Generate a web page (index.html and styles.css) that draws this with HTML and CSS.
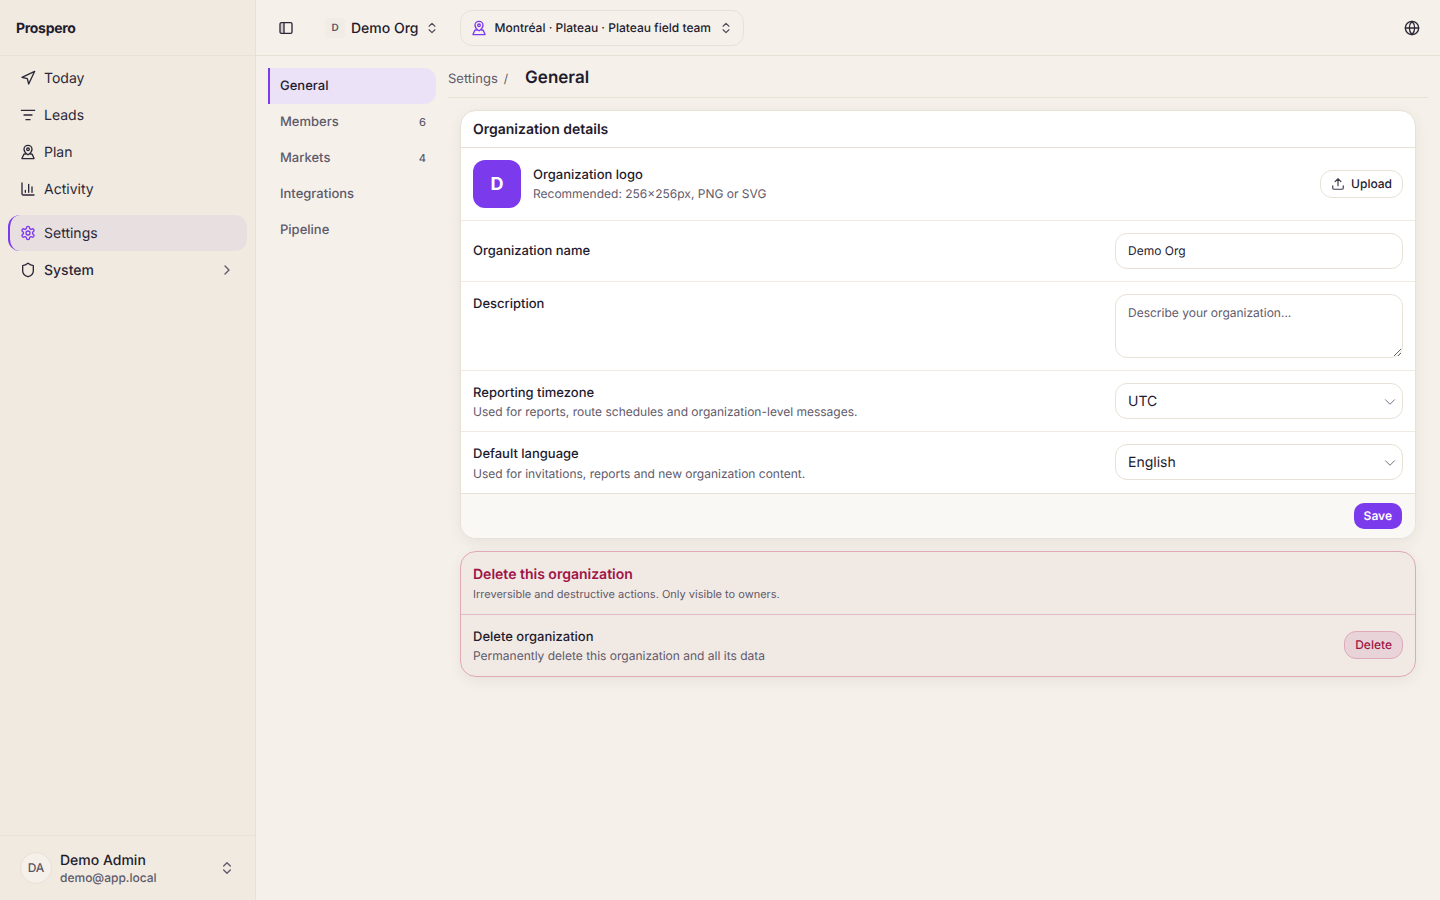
FILE: index.html
```html
<!DOCTYPE html>
<html lang="en">

<head>
    <meta charset="UTF-8">
    <meta name="viewport" content="width=device-width, initial-scale=1.0">
    <title>Prospero - Settings</title>
    <link rel="stylesheet" href="styles.css">
</head>

<body>
    <div class="app">
        <!-- main sidebar -->
        <aside class="sidebar">
            <div class="brand">Prospero</div>
            <nav class="nav">
                <div class="nav-group">
                    <a class="nav-item">
                        <svg class="icon" viewBox="0 0 24 24"><path d="M3 11l19-9-9 19-2-8-8-2z"/></svg>
                        <span>Today</span>
                    </a>
                    <a class="nav-item">
                        <svg class="icon" viewBox="0 0 24 24"><path d="M2 5h20M6 12h12M9 19h6"/></svg>
                        <span>Leads</span>
                    </a>
                    <a class="nav-item">
                        <svg class="icon" viewBox="0 0 24 24"><path d="M18 8c0 3.6-3.6 6.6-5.2 7.8a1.3 1.3 0 0 1-1.6 0C9.6 14.6 6 11.6 6 8a6 6 0 0 1 12 0z"/><circle cx="12" cy="8" r="2"/><path d="M8.8 15H6.6a1 1 0 0 0-.9.6L3 21.500a.4.4 0 0 0 .4.5h17.200a.4.4 0 0 0 .4-.5l-2.700-5.900a1 1 0 0 0-.9-.6h-2.200"/></svg>
                        <span>Plan</span>
                    </a>
                    <a class="nav-item">
                        <svg class="icon" viewBox="0 0 24 24"><path d="M3 3v16a2 2 0 0 0 2 2h16M8 17v-3M13 17V5M18 17V9"/></svg>
                        <span>Activity</span>
                    </a>
                </div>
                <div class="nav-group">
                    <a class="nav-item active">
                        <svg class="icon" viewBox="0 0 24 24"><path d="M12.220 2h-.44a2 2 0 0 0-2 2v.18a2 2 0 0 1-1 1.730l-.43.25a2 2 0 0 1-2 0l-.15-.08a2 2 0 0 0-2.730.73l-.22.38a2 2 0 0 0 .73 2.730l.15.1a2 2 0 0 1 1 1.720v.51a2 2 0 0 1-1 1.740l-.15.09a2 2 0 0 0-.73 2.730l.22.38a2 2 0 0 0 2.730.73l.15-.08a2 2 0 0 1 2 0l.43.25a2 2 0 0 1 1 1.730V20a2 2 0 0 0 2 2h.44a2 2 0 0 0 2-2v-.18a2 2 0 0 1 1-1.730l.43-.25a2 2 0 0 1 2 0l.15.08a2 2 0 0 0 2.730-.73l.22-.39a2 2 0 0 0-.73-2.730l-.15-.08a2 2 0 0 1-1-1.740v-.5a2 2 0 0 1 1-1.740l.15-.09a2 2 0 0 0 .73-2.730l-.22-.38a2 2 0 0 0-2.730-.73l-.15.08a2 2 0 0 1-2 0l-.43-.25a2 2 0 0 1-1-1.730V4a2 2 0 0 0-2-2z"/><circle cx="12" cy="12" r="3"/></svg>
                        <span>Settings</span>
                    </a>
                    <a class="nav-item system">
                        <svg class="icon" viewBox="0 0 24 24"><path d="M20 13c0 5-3.500 7.500-7.660 8.950a1 1 0 0 1-.67-.01C7.500 20.500 4 18 4 13V6a1 1 0 0 1 1-1c2 0 4.500-1.200 6.240-2.720a1.170 1.170 0 0 1 1.520 0C14.510 3.810 17 5 19 5a1 1 0 0 1 1 1z"/></svg>
                        <span>System</span>
                        <svg class="icon chevron-right" viewBox="0 0 24 24"><path d="M9 18l6-6-6-6"/></svg>
                    </a>
                </div>
            </nav>
            <div class="user">
                <div class="avatar">DA</div>
                <div class="user-info">
                    <div class="user-name">Demo Admin</div>
                    <div class="user-mail">demo@app.local</div>
                </div>
                <svg class="icon updown" viewBox="0 0 24 24"><path d="M7 15l5 5 5-5M7 9l5-5 5 5"/></svg>
            </div>
        </aside>

        <div class="main">
            <header class="topbar">
                <button class="toggle">
                    <svg class="icon toggle-icon" viewBox="0 0 24 24"><rect x="3" y="4" width="18" height="16" rx="2"/><path d="M9 4v16"/><path class="fill-bar" d="M3.500 5h5v14h-5z"/></svg>
                </button>
                <div class="org">
                    <span class="org-badge">D</span>
                    <span class="org-name">Demo Org</span>
                    <svg class="icon updown-small" viewBox="0 0 24 24"><path d="M7 15l5 5 5-5M7 9l5-5 5 5"/></svg>
                </div>
                <div class="team">
                    <svg class="icon team-icon" viewBox="0 0 24 24"><path d="M18 8c0 3.600-3.600 6.600-5.200 7.800a1.300 1.300 0 0 1-1.600 0C9.600 14.600 6 11.600 6 8a6 6 0 0 1 12 0z"/><circle cx="12" cy="8" r="2"/><path d="M8.800 15H6.600a1 1 0 0 0-.9.6L3 21.500a.4.4 0 0 0 .4.5h17.200a.4.4 0 0 0 .4-.5l-2.700-5.900a1 1 0 0 0-.9-.6h-2.200"/></svg>
                    <span>Montréal · Plateau · Plateau field team</span>
                    <svg class="icon updown-small" viewBox="0 0 24 24"><path d="M7 15l5 5 5-5M7 9l5-5 5 5"/></svg>
                </div>
                <svg class="icon globe" viewBox="0 0 24 24"><circle cx="12" cy="12" r="10"/><path d="M12 2a14.500 14.500 0 0 0 0 20 14.500 14.500 0 0 0 0-20M2 12h20"/></svg>
            </header>

            <div class="content">
                <!-- settings sections -->
                <nav class="subnav">
                    <a class="sub-item current">General</a>
                    <a class="sub-item">Members<span class="count">6</span></a>
                    <a class="sub-item">Markets<span class="count">4</span></a>
                    <a class="sub-item">Integrations</a>
                    <a class="sub-item">Pipeline</a>
                </nav>

                <div class="page">
                    <div class="crumbs">
                        <span class="crumb">Settings</span>
                        <span class="crumb-sep">/</span>
                        <h1>General</h1>
                    </div>

                    <section class="card">
                        <h2 class="card-title">Organization details</h2>
                        <div class="row logo-row">
                            <div class="logo">D</div>
                            <div class="logo-text">
                                <div class="label">Organization logo</div>
                                <div class="hint">Recommended: 256×256px, PNG or SVG</div>
                            </div>
                            <button class="upload">
                                <svg class="icon" viewBox="0 0 24 24"><path d="M12 15V3M7 8l5-5 5 5M21 15v4a2 2 0 0 1-2 2H5a2 2 0 0 1-2-2v-4"/></svg>
                                <span class="btn-text">Upload</span>
                            </button>
                        </div>
                        <div class="row name-row">
                            <div class="label">Organization name</div>
                            <input class="field" type="text" value="Demo Org">
                        </div>
                        <div class="row desc-row">
                            <div class="label">Description</div>
                            <textarea class="field area" placeholder="Describe your organization..."></textarea>
                        </div>
                        <div class="row">
                            <div class="row-text">
                                <div class="label">Reporting timezone</div>
                                <div class="hint">Used for reports, route schedules and organization-level messages.</div>
                            </div>
                            <div class="field select">UTC
                                <svg class="icon" viewBox="0 0 24 24"><path d="M6 9l6 6 6-6"/></svg>
                            </div>
                        </div>
                        <div class="row lang-row">
                            <div class="row-text">
                                <div class="label">Default language</div>
                                <div class="hint">Used for invitations, reports and new organization content.</div>
                            </div>
                            <div class="field select">English
                                <svg class="icon" viewBox="0 0 24 24"><path d="M6 9l6 6 6-6"/></svg>
                            </div>
                        </div>
                        <div class="card-foot">
                            <button class="save">Save</button>
                        </div>
                    </section>

                    <section class="card danger">
                        <div class="danger-head">
                            <h2>Delete this organization</h2>
                            <p>Irreversible and destructive actions. Only visible to owners.</p>
                        </div>
                        <div class="danger-row">
                            <div class="row-text">
                                <div class="label">Delete organization</div>
                                <div class="hint">Permanently delete this organization and all its data</div>
                            </div>
                            <button class="delete">Delete</button>
                        </div>
                    </section>
                </div>
            </div>
        </div>
    </div>
</body>

</html>
```

FILE: styles.css
```css
* {
    box-sizing: border-box;
}

body {
    margin: 0;
    background: #f5f1ea;
    color: #1f1b2e;
    font-family: Inter, "Noto Sans", sans-serif;
    font-size: 14px;
    line-height: 20px;
    text-rendering: geometricPrecision;
    overflow: hidden;
}

button {
    font-family: inherit;
    text-rendering: inherit;
    cursor: pointer;
}

.app {
    display: flex;
    height: 900px;
}

.icon {
    width: 16px;
    height: 16px;
    flex: none;
    fill: none;
    stroke: currentColor;
    stroke-width: 2;
    stroke-linecap: round;
    stroke-linejoin: round;
}

/* sidebar */
.sidebar {
    width: 256px;
    flex: none;
    display: flex;
    flex-direction: column;
    background: #f0eae0;
    border-right: 1px solid #e8e1d6;
}

.brand {
    height: 56px;
    padding: 3px 16px 0 16px;
    display: flex;
    align-items: center;
    font-size: 14px;
    font-weight: 700;
    letter-spacing: -0.3px;
    border-bottom: 1px solid #e8e1d6;
}

.nav {
    flex: 1;
    padding: 4px 8px;
    display: flex;
    flex-direction: column;
    gap: 8px;
}

.nav-group {
    display: flex;
    flex-direction: column;
    gap: 1px;
}

.nav-item {
    height: 36px;
    padding: 0 12px;
    display: flex;
    align-items: center;
    gap: 8px;
    border-radius: 12px;
    font-size: 14px;
    color: #2b2738;
}

.nav-item span {
    padding-top: 2px;
}

.nav-item.active {
    background: #e8dfe0;
    border-left: 2px solid #7c3aed;
    padding-left: 10px;
}

.nav-item.active .icon {
    color: #7c3aed;
}

.system span {
    font-weight: 500;
}

.chevron-right {
    margin-left: auto;
    color: #5f5a6b;
}

.user {
    height: 65px;
    padding: 0 20px;
    display: flex;
    align-items: center;
    gap: 8px;
    border-top: 1px solid #e8e1d6;
}

.avatar {
    width: 32px;
    height: 32px;
    flex: none;
    display: flex;
    align-items: center;
    justify-content: center;
    border-radius: 50%;
    border: 1px solid #e8e1d6;
    background: #f5f1ea;
    color: #5a5566;
    font-size: 12px;
    font-weight: 500;
}

.user-info {
    flex: 1;
}

.user-name {
    padding-top: 1px;
    font-size: 14px;
    font-weight: 500;
    line-height: 18px;
}

.user-mail {
    margin-top: -1px;
    font-size: 12px;
    font-weight: 500;
    line-height: 17px;
    color: #5f5a6b;
}

.updown {
    color: #5f5a6b;
}

/* top bar */
.main {
    flex: 1;
    min-width: 0;
}

.topbar {
    height: 56px;
    padding: 0 20px;
    display: flex;
    align-items: center;
    border-bottom: 1px solid #e8e1d6;
}

.toggle {
    width: 20px;
    height: 20px;
    padding: 0;
    display: flex;
    align-items: center;
    justify-content: center;
    background: none;
    border: none;
    color: #2b2738;
}

.toggle-icon {
    width: 16px;
    height: 16px;
}

.fill-bar {
    fill: #2b2738;
    stroke: none;
    opacity: 0.18;
}

.org {
    margin-left: 29px;
    display: flex;
    align-items: center;
    height: 36px;
}

.org-badge {
    width: 20px;
    height: 20px;
    display: flex;
    align-items: center;
    justify-content: center;
    background: #f1ece4;
    border-radius: 4px;
    color: #5a5566;
    font-size: 10px;
    font-weight: 600;
}

.org-name {
    margin-left: 6px;
    padding-top: 2px;
    font-size: 14px;
    font-weight: 500;
}

.updown-small {
    width: 14px;
    height: 14px;
    color: #4c4858;
    margin-left: 6px;
}

.team {
    margin-left: 21px;
    height: 36px;
    padding: 0 10px;
    display: flex;
    align-items: center;
    gap: 8px;
    border: 1px solid #e8e1d6;
    border-radius: 12px;
    font-size: 12px;
    font-weight: 500;
}

.team .updown-small {
    margin-left: 0;
}

.team-icon {
    color: #7c3aed;
}

.globe {
    margin-left: auto;
    color: #2b2738;
}

/* content */
.content {
    display: flex;
    padding: 12px 12px 0 12px;
    gap: 12px;
}

.subnav {
    width: 168px;
    flex: none;
}

.sub-item {
    height: 36px;
    padding: 0 10px 0 12px;
    display: flex;
    align-items: center;
    justify-content: space-between;
    font-size: 13px;
    font-weight: 500;
    color: #5f5a6b;
    border-radius: 0 12px 12px 0;
}

.sub-item.current {
    background: #ebe2f8;
    border-left: 2px solid #7c3aed;
    padding-left: 10px;
    color: #1f1b2e;
}

.count {
    font-size: 11px;
    font-weight: 500;
}

.page {
    flex: 1;
    min-width: 0;
}

.crumbs {
    height: 30px;
    padding-top: 1px;
    display: flex;
    align-items: flex-start;
    border-bottom: 1px solid #e8e1d6;
    font-size: 13px;
    color: #5f5a6b;
}

.crumb-sep {
    margin-left: 6px;
    font-size: 12px;
}

h1 {
    margin: -2px 0 0 17px;
    font-size: 17px;
    font-weight: 600;
    line-height: 22px;
    color: #1f1b2e;
}

.card {
    margin: 12px 12px 0 12px;
    background: #fff;
    border: 1px solid #e8e1d6;
    border-radius: 16px;
    box-shadow: 0 4px 14px rgba(60, 45, 30, 0.07);
    overflow: hidden;
}

.card-title {
    margin: 0;
    height: 37px;
    padding: 2px 12px 0 12px;
    display: flex;
    align-items: center;
    font-size: 14px;
    font-weight: 600;
    border-bottom: 1px solid #e8e1d6;
}

.row {
    height: 61px;
    padding: 0 12px;
    display: flex;
    align-items: center;
    justify-content: space-between;
    border-bottom: 1px solid #f0eae0;
}

.row-text {
    padding-top: 2px;
}

.logo-row {
    height: 73px;
    justify-content: flex-start;
    gap: 12px;
}

.desc-row {
    height: 89px;
    align-items: flex-start;
    padding-top: 12px;
}

.lang-row {
    height: 62px;
    padding-bottom: 1px;
    border-bottom: 1px solid #e8e1d6;
}

.lang-row .hint {
    margin-top: 1px;
}

.logo {
    width: 48px;
    height: 48px;
    padding-top: 2px;
    display: flex;
    align-items: center;
    justify-content: center;
    background: #7c3aed;
    border-radius: 12px;
    color: #fff;
    font-size: 18px;
    font-weight: 700;
}

.logo-text {
    flex: 1;
}

.label {
    font-size: 13px;
    font-weight: 500;
    line-height: 20px;
    color: #1f1b2e;
}

.hint {
    font-size: 12px;
    line-height: 18px;
    color: #5f5a6b;
}

.upload {
    height: 28px;
    padding: 0 10px;
    display: flex;
    align-items: center;
    gap: 6px;
    background: #fff;
    border: 1px solid #e8e1d6;
    border-radius: 12px;
    color: #1f1b2e;
    font-size: 12px;
    font-weight: 500;
}

.btn-text {
    padding-bottom: 2px;
}

.upload .icon {
    width: 14px;
    height: 14px;
    color: #3d3949;
}

.field {
    width: 288px;
    height: 36px;
    padding: 0 12px 2px 12px;
    background: #fff;
    border: 1px solid #e8e1d6;
    border-radius: 12px;
    color: #1f1b2e;
    font-family: inherit;
    font-size: 12px;
    text-rendering: inherit;
    outline: none;
}

.area {
    display: block;
    height: 64px;
    padding: 10px 12px;
    line-height: 16px;
    resize: vertical;
}

.area::placeholder {
    color: #5f5a6b;
    opacity: 1;
}

.select {
    display: flex;
    align-items: center;
    justify-content: space-between;
    font-size: 14px;
    padding: 2px 3px 0 12px;
}

.select .icon {
    width: 18px;
    height: 18px;
    color: #6f6a7b;
    stroke-width: 1.300;
}

.card-foot {
    height: 44px;
    padding: 0 13px;
    display: flex;
    align-items: center;
    justify-content: flex-end;
    background: #faf8f4;
}

.save {
    height: 26px;
    padding: 0 10px 2px 10px;
    background: #7c3aed;
    border: none;
    border-radius: 10px;
    color: #fff;
    font-size: 12px;
    font-weight: 600;
}

/* danger zone */
.danger {
    background: #f1e9e4;
    border-color: #dfa9ba;
}

.danger-head {
    height: 63px;
    padding: 13px 12px 0 12px;
    border-bottom: 1px solid #e6bcc8;
}

.danger-head h2 {
    margin: 0;
    font-size: 14px;
    font-weight: 600;
    line-height: 20px;
    color: #9f1447;
}

.danger-head p {
    margin: 1px 0 0 0;
    font-size: 11px;
    line-height: 16px;
    color: #5f5a6b;
}

.danger-row {
    height: 61px;
    padding: 0 12px 1px 12px;
    display: flex;
    align-items: center;
    justify-content: space-between;
}

.delete {
    height: 28px;
    padding: 0 10px 2px 10px;
    background: #e8d4d8;
    border: 1px solid #dfa9ba;
    border-radius: 12px;
    color: #9f1447;
    font-size: 12px;
    font-weight: 500;
}
```
